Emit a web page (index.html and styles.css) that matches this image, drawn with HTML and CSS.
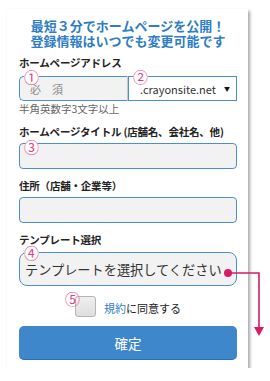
FILE: index.html
```html
<!DOCTYPE html>
<html lang="ja">
<head>
  <meta charset="UTF-8" />
  <title>ホームページ作成</title>
  <link rel="stylesheet" href="styles.css">
</head>
<body>
  <div class="card">
    <h1 class="lead">最短３分でホームページを公開！<br>登録情報はいつでも変更可能です</h1>

    <div class="field first">
      <div class="label">ホームページアドレス</div>
      <div class="address-row">
        <div class="box input half">
          <span class="num">①</span>
          <span class="placeholder">必　須</span>
        </div>
        <div class="box select half">
          <span class="num">②</span>
          <span>.crayonsite.net</span>
          <span class="caret">▼</span>
        </div>
      </div>
      <div class="note">半角英数字3文字以上</div>
    </div>

    <div class="field title-field">
      <div class="label">ホームページタイトル (店舗名、会社名、他)</div>
      <div class="box input">
        <span class="num">③</span>
      </div>
    </div>

    <div class="field">
      <div class="label">住所（店舗・企業等）</div>
      <div class="box input"></div>
    </div>

    <div class="field template-field">
      <div class="label">テンプレート選択</div>
      <div class="box input template">
        <span class="num">④</span>
        <span class="template-text">テンプレートを選択してください</span>
        <span class="dot"></span>
      </div>
    </div>

    <div class="agree">
      <span class="checkbox">
        <span class="num">⑤</span>
      </span>
      <span class="agree-text"><a href="#">規約</a>に同意する</span>
    </div>

    <button class="submit">確定</button>
  </div>

  <!-- ピンクの矢印 -->
  <svg class="arrow" width="45" height="75" viewBox="0 0 45 75">
    <path d="M3 5 H34 V60" fill="none" stroke="#d81b66" stroke-width="1.6" />
    <polygon points="29,59 39,59 34,68" fill="#d81b66" />
  </svg>
</body>
</html>
```

FILE: styles.css
```css
body {
  font-family: "Noto Sans CJK JP", "Noto Sans", sans-serif;
  background: #fff;
  margin: 0;
  padding: 0;
  color: #222;
}
.card {
  margin: 9px 0 0 7px;
  width: 218px;
  padding: 10px 11px 8px 12px;
  background: #fff;
  box-shadow: 2px 2px 3px rgba(0, 0, 0, 0.35);
}
.lead {
  margin: 0;
  font-size: 13px;
  line-height: 14.5px;
  font-weight: bold;
  color: #2f7dc4;
  text-align: center;
}
.field {
  margin-top: 10px;
}
.field.first {
  margin-top: 8px;
}
.label {
  font-size: 10.5px;
  line-height: 14px;
  font-weight: bold;
  color: #222;
  white-space: nowrap;
  letter-spacing: -0.2px;
  margin-bottom: 4px;
}
.first .label {
  margin-bottom: 6px;
}
.template-field .label {
  margin-bottom: 5px;
}
.box {
  position: relative;
  box-sizing: border-box;
  height: 26px;
  border: 1px solid #4a8fd3;
  display: flex;
  align-items: center;
  font-size: 11px;
}
.input {
  background: #f2f2f2;
  border-radius: 4px;
}
.address-row {
  display: flex;
}
.half {
  width: 109px;
  height: 25px;
}
.address-row .input {
  border-radius: 5px 0 0 5px;
  border-right: 1px solid #c8c8c8;
  padding-left: 10px;
}
.placeholder {
  color: #8a8a8a;
  margin-top: 1px;
}
.select {
  background: #fff;
  border-left: 1px solid #4a8fd3;
  padding: 0 6px 0 11px;
  justify-content: space-between;
  color: #333;
}
.caret {
  font-size: 6px;
  color: #111;
}
.note {
  font-size: 10.5px;
  line-height: 13px;
  color: #666;
  margin-top: 1px;
}
.num {
  position: absolute;
  top: -6px;
  left: 4px;
  font-size: 15px;
  line-height: 12px;
  color: #e3417f;
  background: #fff;
  border-radius: 50%;
}
.title-field .num {
  top: -3px;
}
.template {
  height: 34px;
  border-radius: 8px;
  padding-left: 5px;
}
.template-text {
  font-size: 13.2px;
  color: #333;
  white-space: nowrap;
  margin-top: 1px;
}
.template .num {
  top: -6px;
}
.dot {
  position: absolute;
  left: 204px;
  top: 16px;
  width: 8px;
  height: 8px;
  border-radius: 50%;
  background: #d81b66;
}
.agree {
  display: flex;
  justify-content: center;
  align-items: center;
  gap: 8px;
  margin-top: 10px;
  font-size: 11px;
  color: #222;
}
.agree-text {
  margin-top: 3px;
}
.agree a {
  color: #2f7dc4;
  text-decoration: none;
}
.checkbox {
  position: relative;
  box-sizing: border-box;
  width: 21px;
  height: 21px;
  border: 1px solid #b5b5b5;
  border-radius: 3px;
  background: linear-gradient(#f0f0f0, #dedede);
}
.checkbox .num {
  top: -4px;
  left: -11px;
  background: transparent;
}
.submit {
  display: block;
  width: 100%;
  height: 34px;
  margin-top: 9px;
  border: none;
  border-bottom: 1px solid #2f6fae;
  border-radius: 5px;
  background: #3d87ca;
  color: #fff;
  font-family: inherit;
  font-size: 13.5px;
  cursor: pointer;
}
.arrow {
  position: absolute;
  left: 225px;
  top: 268px;
}
```
